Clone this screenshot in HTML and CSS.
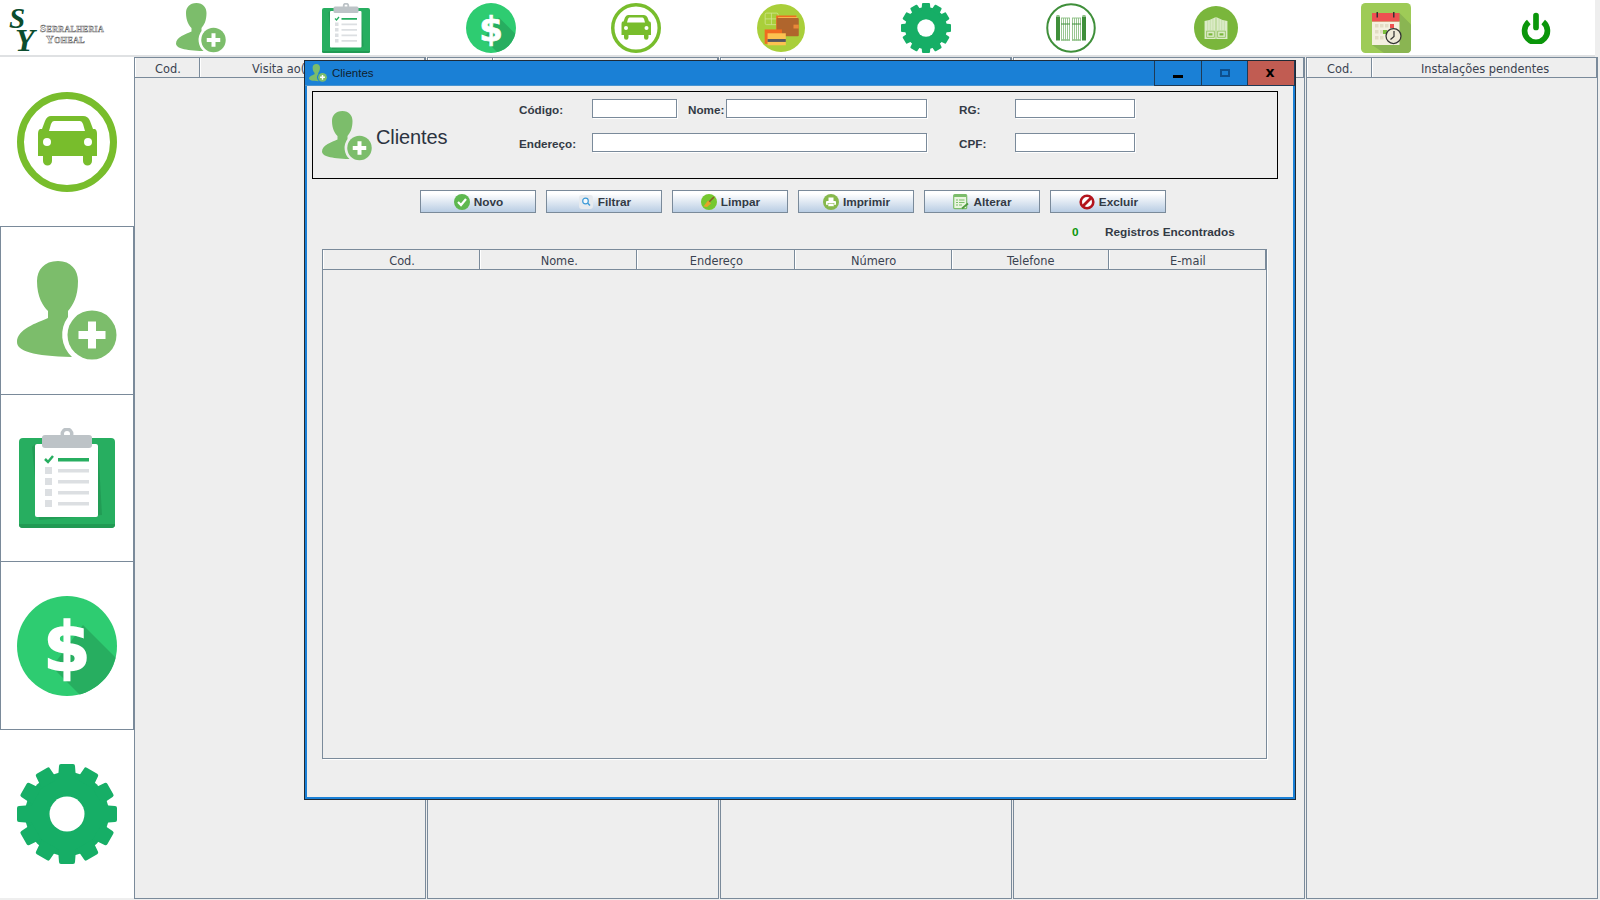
FILE: index.html
```html
<!DOCTYPE html>
<html lang="pt">
<head>
<meta charset="utf-8">
<title>Clientes</title>
<link rel="stylesheet" href="styles.css">
</head>
<body>
<svg class="defs" width="0" height="0" aria-hidden="true">
  <defs>
    <clipPath id="clip-dollar"><circle cx="50" cy="50" r="50"/></clipPath>
    <symbol id="i-person" viewBox="0 0 100 100">
      <path fill="#7cbd6b" d="M41 0C27 0 20 9 20 20C20 36 26 45 31 50V57C20 62 0 68 0 81C0 90 16 95 55 96A30 30 0 0 1 51 56V50C56 44 61 36 61 20C61 9 54 0 41 0Z"/>
      <circle cx="75" cy="74" r="24.5" fill="#7cbd6b"/>
      <path fill="#fff" d="M71 60.500H79V70H88.500V78H79V87.500H71V78H61.500V70H71Z"/>
    </symbol>
    <symbol id="i-clip" viewBox="0 0 100 100">
      <rect x="2" y="10" width="96" height="90" rx="4" fill="#27ae60"/>
      <path fill="#219a53" d="M2 96V97Q2 100 6 100H94Q98 100 98 97V96Z"/>
      <path fill="#229c55" d="M15 19L18 16H81L85 87L22 92Z"/>
      <rect x="18" y="16" width="63" height="73" rx="2" fill="#fff"/>
      <circle cx="50" cy="6" r="6.500" fill="#bdc3c7"/>
      <circle cx="50" cy="6" r="3" fill="#fff"/>
      <rect x="25" y="7" width="50" height="13" rx="3" fill="#bdc3c7"/>
      <path fill="none" stroke="#27ae60" stroke-width="2.500" d="M28 31L31 34L36 28"/>
      <rect x="41" y="30" width="31" height="3.500" fill="#27ae60"/>
      <rect x="28" y="39" width="7" height="7" fill="#dcdfe2"/><rect x="41" y="41" width="31" height="3.500" fill="#dcdfe2"/>
      <rect x="28" y="50" width="7" height="7" fill="#dcdfe2"/><rect x="41" y="52" width="31" height="3.500" fill="#dcdfe2"/>
      <rect x="28" y="61" width="7" height="7" fill="#dcdfe2"/><rect x="41" y="63" width="31" height="3.500" fill="#dcdfe2"/>
      <rect x="28" y="72" width="7" height="7" fill="#dcdfe2"/><rect x="41" y="74" width="31" height="3.500" fill="#dcdfe2"/>
    </symbol>
    <symbol id="i-dollar" viewBox="0 0 100 100">
      <circle cx="50" cy="50" r="50" fill="#2ecc71"/>
      <polygon clip-path="url(#clip-dollar)" fill="#27ae60" points="66,29 100,63 100,100 64,100 35,71"/>
      <text class="svg-dollar" x="50" y="75" text-anchor="middle">$</text>
    </symbol>
    <symbol id="i-car" viewBox="0 0 100 100">
      <circle cx="50" cy="50" r="46.500" fill="none" stroke="#78bd2c" stroke-width="7"/>
      <path fill="#78bd2c" d="M34 24H66Q71 24 73 29L76 37H78Q80 38 80 42V64H75V69A4.500 4.500 0 0 1 66 69V64H35V69A4.500 4.500 0 0 1 26 69V64H21V42Q21 38 23 37H25L28 29Q30 24 34 24Z"/>
      <path fill="#fff" d="M37 29H63Q65 29 66 32L68 39H32L34 32Q35 29 37 29Z"/>
      <circle cx="30" cy="50" r="4" fill="#fff"/><circle cx="71" cy="50" r="4" fill="#fff"/>
    </symbol>
    <symbol id="i-wallet" viewBox="0 0 100 100">
      <circle cx="50" cy="50" r="50" fill="#a9cf3a"/>
      <g fill="none" stroke="#d5e79a" stroke-width="1.500">
        <rect x="17" y="19" width="27" height="24" rx="3"/>
        <path d="M30 19V43M17 31H44"/>
      </g>
      <rect x="40" y="24" width="42" height="38" fill="#ef6c20"/>
      <rect x="41" y="29" width="46" height="38" rx="2" fill="#b0652c"/>
      <rect x="44" y="27" width="40" height="2" fill="#f7b955"/>
      <rect x="76" y="43" width="11" height="8" fill="#e8893a"/>
      <rect x="16" y="53" width="36" height="30" fill="#ef6c20"/>
      <rect x="22" y="61" width="38" height="25" fill="#fcc250"/>
      <rect x="22" y="73" width="38" height="6" fill="#55555d"/>
    </symbol>
    <symbol id="i-gear" viewBox="0 0 100 100">
      <g fill="#16ae66">
        <circle cx="50" cy="50" r="42"/>
        <path id="tooth" d="M41 15L42 2Q42 0 44 0H56Q58 0 58 2L59 15Z"/>
        <use href="#tooth" transform="rotate(30 50 50)"/><use href="#tooth" transform="rotate(60 50 50)"/>
        <use href="#tooth" transform="rotate(90 50 50)"/><use href="#tooth" transform="rotate(120 50 50)"/>
        <use href="#tooth" transform="rotate(150 50 50)"/><use href="#tooth" transform="rotate(180 50 50)"/>
        <use href="#tooth" transform="rotate(210 50 50)"/><use href="#tooth" transform="rotate(240 50 50)"/>
        <use href="#tooth" transform="rotate(270 50 50)"/><use href="#tooth" transform="rotate(300 50 50)"/>
        <use href="#tooth" transform="rotate(330 50 50)"/>
      </g>
      <circle cx="50" cy="50" r="17.500" fill="#fff"/>
    </symbol>
    <symbol id="i-gate" viewBox="0 0 100 100">
      <circle cx="50" cy="50" r="47.500" fill="none" stroke="#3f8f3a" stroke-width="4"/>
      <rect x="20" y="27" width="8" height="48" fill="#3f8f3a"/><rect x="21" y="24" width="6" height="3" fill="#8cc084"/>
      <rect x="72" y="27" width="8" height="48" fill="#3f8f3a"/><rect x="73" y="24" width="6" height="3" fill="#8cc084"/>
      <g fill="none" stroke="#8cc084" stroke-width="1.800">
        <path d="M31 30V75M35 30V75M39 30V75M43 30V75M47 30V75M53 30V75M57 30V75M61 30V75M65 30V75M69 30V75"/>
        <path d="M30 30H48M52 30H70"/>
      </g>
      <path stroke="#3f8f3a" stroke-width="2" d="M30 42H48M52 42H70"/>
      <path stroke="#8cc084" stroke-width="3" d="M30 74H48M52 74H70"/>
    </symbol>
    <symbol id="i-arch" viewBox="0 0 100 100">
      <circle cx="50" cy="50" r="50" fill="#7ab63c"/>
      <path fill="#dcebc8" d="M24 34Q38 32 50 25Q62 32 76 34V75H24Z"/>
      <g stroke="#a9cf82" stroke-width="0.900"><path d="M31 32V55M37 31V55M43 28V55M57 28V55M63 31V55M69 32V55"/></g>
      <path stroke="#7ab63c" stroke-width="1.200" d="M50 25V75"/>
      <rect x="29" y="57" width="17" height="14" fill="none" stroke="#7ab63c" stroke-width="1.500"/>
      <rect x="54" y="57" width="17" height="14" fill="none" stroke="#7ab63c" stroke-width="1.500"/>
      <rect x="33" y="62" width="9" height="5" fill="#7ab63c"/><rect x="58" y="62" width="9" height="5" fill="#7ab63c"/>
    </symbol>
    <symbol id="i-cal" viewBox="0 0 100 100">
      <rect width="100" height="100" rx="9" fill="#9ecb57"/>
      <path fill="#8ab552" d="M77 20L100 43V91Q100 100 91 100H46L22 84Z"/>
      <rect x="22" y="37" width="55" height="47" fill="#f4f0e0"/>
      <rect x="22" y="20" width="55" height="17" fill="#ee5151"/>
      <rect x="31" y="18" width="3" height="11" fill="#333"/><rect x="64" y="18" width="3" height="11" fill="#333"/>
      <g fill="#e3dcc5">
        <rect x="28" y="42" width="7" height="7"/><rect x="38" y="42" width="7" height="7"/><rect x="48" y="42" width="7" height="7"/>
        <rect x="28" y="54" width="7" height="7"/><rect x="38" y="54" width="7" height="7"/>
        <rect x="28" y="66" width="7" height="7"/><rect x="38" y="66" width="7" height="7"/>
      </g>
      <rect x="58" y="42" width="8" height="8" fill="#ee5151"/>
      <rect x="44" y="54" width="8" height="8" fill="#7cbd3c"/>
      <circle cx="65" cy="66" r="15" fill="#eee9d8" stroke="#333" stroke-width="2.500"/>
      <path fill="none" stroke="#333" stroke-width="2.500" d="M66 56V67L59 73"/>
    </symbol>
    <symbol id="i-power" viewBox="0 0 100 100">
      <path fill="none" stroke="#0a960a" stroke-width="19" d="M26 30A38 38 0 1 0 74 30"/>
      <path fill="none" stroke="#0a960a" stroke-width="19" stroke-linecap="round" d="M50 9V48"/>
    </symbol>
    <symbol id="b-ok" viewBox="0 0 16 16">
      <circle cx="8" cy="8" r="8" fill="#5eb84f"/>
      <path fill="none" stroke="#fff" stroke-width="2.200" d="M4 8L7 11L12 5"/>
    </symbol>
    <symbol id="b-search" viewBox="0 0 16 16">
      <rect x="1" y="1" width="14" height="14" rx="3" fill="#e6eaee"/>
      <circle cx="7.500" cy="7" r="2.800" fill="#f6fafd" stroke="#3d9bd8" stroke-width="1.200"/>
      <path stroke="#3d9bd8" stroke-width="1.400" d="M9.800 9.300L12 11.500"/>
    </symbol>
    <symbol id="b-broom" viewBox="0 0 16 16">
      <circle cx="8" cy="8" r="8" fill="#76c830"/>
      <path stroke="#8a5a2a" stroke-width="1.600" d="M13 3L7 9"/>
      <path fill="#e6a22a" d="M7 6.500L10 9.500L6 13L2.500 12.500Z"/>
    </symbol>
    <symbol id="b-print" viewBox="0 0 16 16">
      <circle cx="8" cy="8" r="8" fill="#86b84c"/>
      <rect x="5.500" y="3.500" width="5" height="4" fill="#fff"/>
      <rect x="3" y="7" width="10" height="4" rx="1" fill="#fff"/>
      <rect x="5" y="9.500" width="6" height="3" fill="#fff" stroke="#86b84c" stroke-width="0.600"/>
    </symbol>
    <symbol id="b-edit" viewBox="0 0 16 16">
      <rect x="0.700" y="0.700" width="13" height="14" rx="1" fill="#eaf5e0" stroke="#7cbd6b" stroke-width="1.200"/>
      <rect x="1" y="1" width="12" height="2" fill="#7cbd6b"/>
      <path stroke="#7cbd6b" stroke-width="1.100" d="M3 6H5M6 6H11.500M3 8.500H5M6 8.500H11.500M3 11H5M6 11H9"/>
      <path stroke="#4f9a3f" stroke-width="1.800" d="M9 14.500L15 9.500"/>
    </symbol>
    <symbol id="b-no" viewBox="0 0 16 16">
      <circle cx="8" cy="8" r="6.300" fill="#fff" stroke="#b3141c" stroke-width="2.600"/>
      <path stroke="#b3141c" stroke-width="2.800" d="M3.500 12.500L12.500 3.500"/>
    </symbol>
  </defs>
</svg>

<div class="app">
  <header class="toolbar">
    <div class="logo">
      <div class="logo-mark"><span class="logo-s">S</span><span class="logo-y">Y</span></div>
      <div class="logo-name"><span>Serralheria</span><span class="logo-name-2">Yoheal</span></div>
    </div>
    <button class="tool"><svg class="ti"><use href="#i-person"/></svg></button>
    <button class="tool"><svg class="ti"><use href="#i-clip"/></svg></button>
    <button class="tool"><svg class="ti"><use href="#i-dollar"/></svg></button>
    <button class="tool"><svg class="ti"><use href="#i-car"/></svg></button>
    <button class="tool"><svg class="ti ti-48"><use href="#i-wallet"/></svg></button>
    <button class="tool"><svg class="ti"><use href="#i-gear"/></svg></button>
    <button class="tool"><svg class="ti"><use href="#i-gate"/></svg></button>
    <button class="tool"><svg class="ti ti-44"><use href="#i-arch"/></svg></button>
    <button class="tool tool-cal"><svg class="ti ti-cal"><use href="#i-cal"/></svg></button>
    <button class="tool tool-power"><svg class="ti ti-power"><use href="#i-power"/></svg></button>
  </header>

  <main class="main">
    <nav class="sidebar">
      <button class="side-btn side-first nudge"><svg class="si"><use href="#i-car"/></svg></button>
      <button class="side-btn framed nudge"><svg class="si"><use href="#i-person"/></svg></button>
      <button class="side-btn framed"><svg class="si"><use href="#i-clip"/></svg></button>
      <button class="side-btn framed framed-last"><svg class="si"><use href="#i-dollar"/></svg></button>
      <button class="side-btn"><svg class="si"><use href="#i-gear"/></svg></button>
    </nav>
    <section class="panels">
      <div class="panel"><div class="thead"><div class="th th-cod">Cod.</div><div class="th th-wide th-left">Visita ao(</div></div></div>
      <div class="panel"><div class="thead"><div class="th th-cod"></div><div class="th th-wide"></div></div></div>
      <div class="panel"><div class="thead"><div class="th th-cod"></div><div class="th th-wide"></div></div></div>
      <div class="panel"><div class="thead"><div class="th th-cod"></div><div class="th th-wide"></div></div></div>
      <div class="panel"><div class="thead"><div class="th th-cod">Cod.</div><div class="th th-wide">Instalações pendentes</div></div></div>
    </section>
  </main>

  <section class="dialog">
    <div class="titlebar">
      <svg class="title-icon"><use href="#i-person"/></svg>
      <span class="title-text">Clientes</span>
      <div class="win-btns">
        <button class="win-btn win-min"><span class="glyph-min"></span></button>
        <button class="win-btn"><span class="glyph-max"></span></button>
        <button class="win-btn win-close"><span class="glyph-x">x</span></button>
      </div>
    </div>
    <div class="dialog-body">
      <div class="head-panel">
        <div class="brand">
          <svg class="brand-icon"><use href="#i-person"/></svg>
          <span class="brand-text">Clientes</span>
        </div>
        <div class="form">
          <label class="lbl">Código:</label><input class="field" type="text">
          <label class="lbl lbl-nome">Nome:</label><input class="field" type="text">
          <label class="lbl lbl-rg">RG:</label><input class="field" type="text">
          <label class="lbl">Endereço:</label><input class="field field-end" type="text">
          <label class="lbl lbl-rg">CPF:</label><input class="field" type="text">
        </div>
      </div>
      <div class="actions">
        <button class="act"><svg class="bi"><use href="#b-ok"/></svg>Novo</button>
        <button class="act"><svg class="bi"><use href="#b-search"/></svg>Filtrar</button>
        <button class="act"><svg class="bi"><use href="#b-broom"/></svg>Limpar</button>
        <button class="act"><svg class="bi"><use href="#b-print"/></svg>Imprimir</button>
        <button class="act"><svg class="bi"><use href="#b-edit"/></svg>Alterar</button>
        <button class="act"><svg class="bi"><use href="#b-no"/></svg>Excluir</button>
      </div>
      <div class="count"><span class="count-n">0</span><span class="count-t">Registros Encontrados</span></div>
      <div class="grid-table">
        <div class="grid-head">
          <div class="th">Cod.</div><div class="th">Nome.</div><div class="th">Endereço</div>
          <div class="th">Número</div><div class="th">Telefone</div><div class="th">E-mail</div>
        </div>
      </div>
    </div>
  </section>
</div>
</body>
</html>
```
FILE: styles.css
```css
* { box-sizing: border-box; }
html, body { margin: 0; width: 1600px; height: 900px; overflow: hidden; background: #eeeeee; }
body { font-family: "DejaVu Sans", sans-serif; color: #333a45; }
button { font: inherit; padding: 0; margin: 0; background: none; border: 0; }
.defs { display: block; width: 0; height: 0; overflow: hidden; }
.svg-dollar { font-family: "DejaVu Sans", sans-serif; font-weight: 700; font-size: 68px; fill: #fff; stroke: #fff; stroke-width: 1.5px; }

.app { position: relative; width: 1600px; height: 900px; }

.toolbar { display: flex; align-items: center; width: 1595px; height: 57px; background: #fff; border-bottom: 2px solid #dfe1e3; }
.logo { display: flex; width: 128px; flex: none; padding: 7px 0 0 9px; height: 55px; }
.logo-mark { display: flex; flex-direction: column; width: 31px; font-family: "Liberation Serif", serif; font-weight: 700; font-style: italic; color: #0b4d2e; }
.logo-s { font-size: 29px; line-height: 17px; padding-top: 3px; }
.logo-y { font-size: 32px; line-height: 20px; margin-left: 6px; padding-top: 3px; }
.logo-name { display: flex; flex-direction: column; padding-top: 16px; font-family: "Liberation Serif", serif; font-variant: small-caps; font-weight: 700; font-size: 11px; letter-spacing: 0.35px; line-height: 11px; color: #fff; -webkit-text-stroke: 0.5px #666; white-space: nowrap; }
.logo-name-2 { margin-left: 6px; }
.tool { display: flex; align-items: center; justify-content: center; width: 145px; flex: none; height: 55px; }
.tool-cal { width: 195px; }
.tool-power { width: 105px; }
.ti { display: block; width: 50px; height: 50px; }
.ti-48 { width: 48px; height: 48px; }
.ti-44 { width: 44px; height: 44px; }
.ti-cal { width: 50px; height: 50px; }
.ti-power { width: 30px; height: 32px; }

.main { display: flex; height: 842px; }
.sidebar { display: flex; flex-direction: column; width: 134px; flex: none; height: 841px; background: #fff; }
.side-btn { display: flex; align-items: center; justify-content: center; width: 134px; height: 168px; background: #fff; }
.side-first { height: 169px; }
.nudge { padding-top: 2px; }
.framed { border: 1px solid #7a8a9a; border-bottom: 0; }
.framed-last { border-bottom: 1px solid #7a8a9a; height: 169px; }
.si { display: block; width: 100px; height: 100px; }

.panels { display: grid; grid-template-columns: repeat(5, 292px); column-gap: 1px; }
.panel { border: 1px solid #7a8a9a; border-top: 0; background: #eeeeee; height: 842px; }
.thead { display: flex; height: 21px; border-top: 1px solid #7a8a9a; }
.th { display: flex; align-items: center; justify-content: center; padding: 2px 0 0 2px; font-size: 11.4px; white-space: nowrap; overflow: hidden; background: #eeeeee; border-right: 1px solid #7a8a9a; border-bottom: 1px solid #7a8a9a; box-shadow: inset 1px 0 0 #fff; color: #3a4250; }
.th-cod { width: 65px; flex: none; }
.th-wide { flex: 1; }
.th-left { justify-content: flex-start; padding-left: 52px; }

.dialog { position: absolute; left: 304px; top: 60px; width: 992px; height: 740px; border: 1px solid #1f2a35; background: #eeeeee; display: flex; flex-direction: column; }
.titlebar { display: flex; align-items: center; height: 25px; flex: none; padding-left: 1px; background: #1a80d6; border-bottom: 1px solid #4a94d0; }
.title-icon { width: 18px; height: 18px; margin: 0 5px 0 3px; flex: none; }
.title-text { font-family: "Liberation Sans", sans-serif; font-size: 11.5px; color: #10202e; }
.win-btns { display: flex; margin-left: auto; height: 25px; margin-bottom: -1px; }
.win-btn { display: flex; align-items: center; justify-content: center; height: 25px; width: 46px; background: #1a80d6; border-left: 1px solid #1f3a55; border-bottom: 1px solid #1f3a55; }
.win-min { width: 47px; }
.win-close { background: #c15c52; width: 48px; border-right: 1px solid #1f3a55; }
.glyph-min { display: block; width: 10px; height: 3px; background: #000; margin-top: 6px; }
.glyph-max { display: block; width: 10px; height: 8px; border: 2px solid #0d4f8e; background: #1a80d6; }
.glyph-x { font-family: "DejaVu Sans", sans-serif; font-weight: 700; font-size: 14px; line-height: 14px; color: #000; margin: -2px 2px 0 0; }

.dialog-body { flex: 1; border: 2px solid #1a80d6; border-top: 0; padding: 5px 0 0 5px; min-height: 0; }
.head-panel { display: flex; width: 966px; height: 88px; border: 1px solid #000; }
.brand { display: flex; align-items: center; width: 206px; flex: none; padding: 2px 0 0 9px; }
.brand-icon { width: 50px; height: 50px; flex: none; margin-right: 4px; }
.brand-text { font-family: "Liberation Sans", sans-serif; font-size: 20px; letter-spacing: -0.1px; margin-top: 2px; color: #2b3340; }
.form { display: grid; grid-template-columns: 73px 85px 11px 38px 201px 32px 56px 120px; grid-template-rows: 19px 19px; row-gap: 15px; margin-top: 7px; align-items: center; align-content: start; font-family: "Liberation Sans", sans-serif; }
.lbl { font-weight: 700; font-size: 11.7px; padding-top: 2px; color: #333a45; white-space: nowrap; }
.lbl-nome { grid-column: 4; }
.lbl-rg { grid-column: 7; }
.field { display: block; width: 100%; height: 19px; margin: 0; padding: 0; background: #fff; border: 1px solid #7a8a9a; box-shadow: 1px 1px 0 #fff; }
.field:nth-of-type(1) { grid-column: 2; }
.field:nth-of-type(2) { grid-column: 5; }
.field:nth-of-type(3) { grid-column: 8; }
.field-end { grid-column: 2 / 6; }
.field-end ~ .field { grid-column: 8; }

.actions { display: flex; gap: 10px; padding-left: 108px; margin-top: 11px; }
.act { display: flex; align-items: center; justify-content: center; gap: 4px; width: 116px; height: 23px; border: 1px solid #7a8a9a; background: linear-gradient(#ffffff 0%, #ffffff 12%, #b9cde3 100%); font-family: "Liberation Sans", sans-serif; font-weight: 700; font-size: 11.8px; color: #333a45; }
.bi { display: block; width: 16px; height: 16px; flex: none; margin-left: 1px; }

.count { display: flex; height: 14px; margin-top: 12px; padding-left: 760px; align-items: center; font-family: "Liberation Sans", sans-serif; font-weight: 700; font-size: 11.8px; }
.count-n { width: 33px; color: #0a960a; }
.count-t { color: #333a45; }

.grid-table { width: 945px; height: 510px; margin: 10px 0 0 10px; border: 1px solid #7a8a9a; box-shadow: 1px 1px 0 #fff; }
.grid-head { display: grid; grid-template-columns: repeat(6, 1fr); height: 20px; }
```
